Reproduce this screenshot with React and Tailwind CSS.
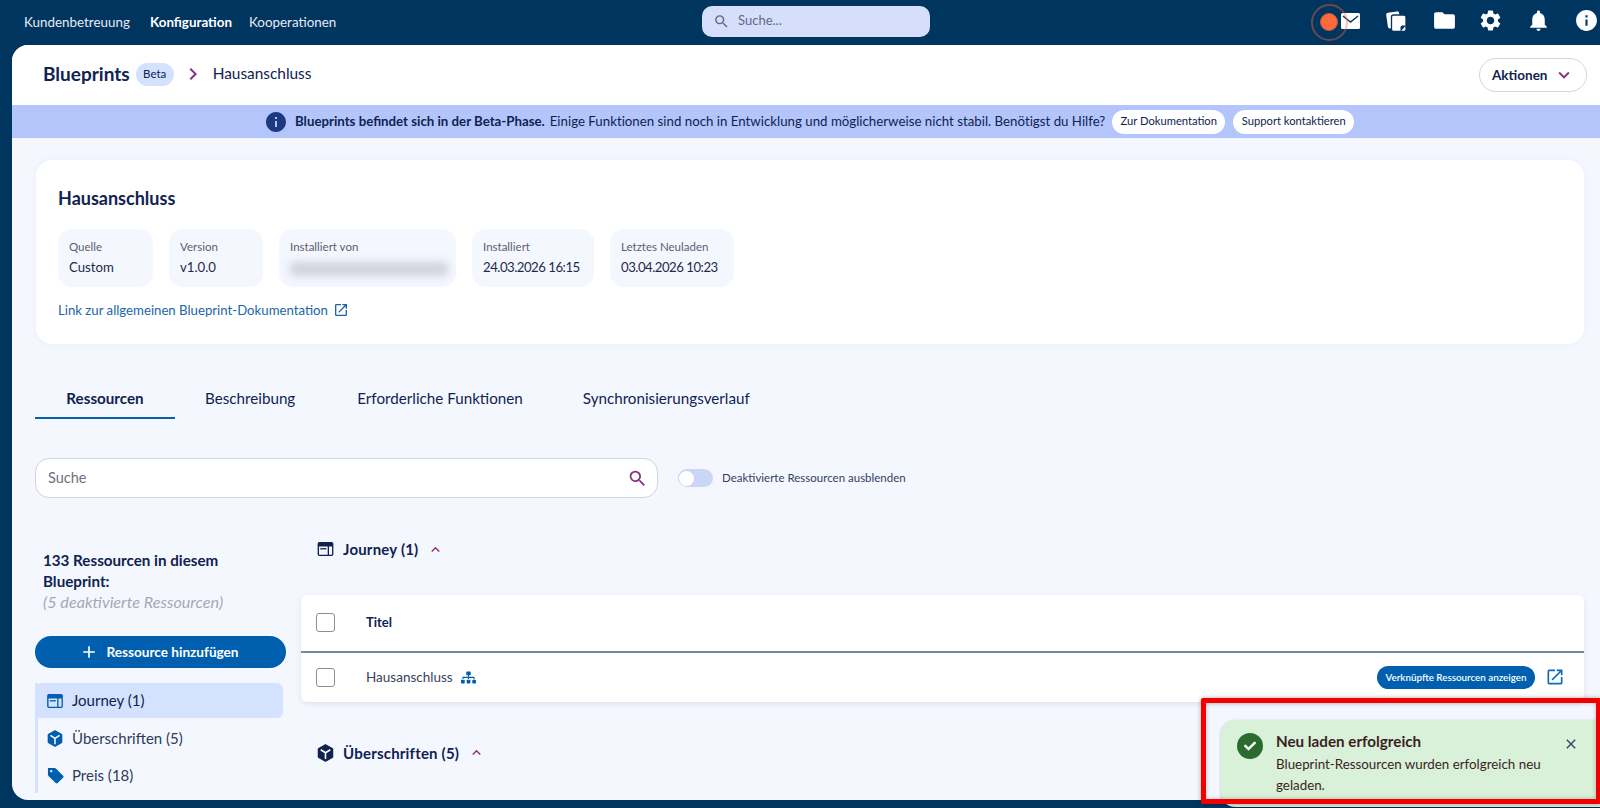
import React from 'react';
import { MdFolder, MdSettings, MdNotifications, MdInfo, MdSearch, MdOpenInNew, MdKeyboardArrowDown, MdKeyboardArrowUp, MdChevronRight, MdAdd, MdClose } from 'react-icons/md';
import { FaSitemap, FaCheck } from 'react-icons/fa';

const facts = [
    { label: 'Quelle', value: 'Custom', width: 'w-[95px]' },
    { label: 'Version', value: 'v1.0.0', width: 'w-[94px]' },
    { label: 'Installiert von', value: null, width: 'w-[177px]' },
    { label: 'Installiert', value: '24.03.2026 16:15', width: 'w-[122px]' },
    { label: 'Letztes Neuladen', value: '03.04.2026 10:23', width: 'w-[124px]' },
];

const JourneyIcon = ({ className }) => (
    <svg viewBox="0 0 18 16" className={className} fill="currentColor">
        <path d="M2 0h14a2 2 0 0 1 2 2v12a2 2 0 0 1-2 2H2a2 2 0 0 1-2-2V2a2 2 0 0 1 2-2zm-.4 5v9c0 .3.2.5.5.5h9.400V5zm11.400 0v9.500h3c.3 0 .5-.2.5-.5V5z" fillRule="evenodd" />
        <rect x="3" y="7" width="7" height="1.500" />
    </svg>
);

const CubeIcon = ({ className }) => (
    <svg viewBox="0 0 16 18" className={className} fill="none">
        <path d="M8 1 L15 5 V13 L8 17 L1 13 V5 Z" fill="currentColor" stroke="currentColor" strokeWidth="1.500" strokeLinejoin="round" />
        <path d="M3.200 5.800 L8 8.800 L12.800 5.800 M8 8.800 V15" stroke="white" strokeWidth="1.600" />
    </svg>
);

const TagIcon = ({ className }) => (
    <svg viewBox="0 0 18 18" className={className} fill="currentColor">
        <path fillRule="evenodd" d="M1 1h7a2 2 0 0 1 1.400.6l7.600 7.600a1.500 1.500 0 0 1 0 2.100l-5.700 5.700a1.500 1.500 0 0 1-2.100 0L1.600 9.400A2 2 0 0 1 1 8zm3.500 2.200a1.200 1.200 0 1 0 0 2.400 1.200 1.200 0 0 0 0-2.400z" />
    </svg>
);

const MailIcon = () => (
    <span className="flex w-[25px] justify-center">
        <svg viewBox="0 0 19 16" className="w-[19px] h-[16px]">
            <rect width="19" height="16" rx="1.500" fill="white" />
            <path d="M2 3 L9.500 9 L17 3" fill="none" stroke="#003560" strokeWidth="1.400" />
        </svg>
    </span>
);

const CopiesIcon = () => (
    <svg viewBox="0 0 21 22" className="w-[21px] h-[22px]">
        <rect x="1" y="2" width="13" height="16" rx="2" fill="white" transform="rotate(-8 7 10)" />
        <rect x="5.500" y="5" width="14.500" height="16.500" rx="2" fill="white" stroke="#003560" strokeWidth="1.300" />
        <path d="M20 15.500 L14.500 21.500 V17.500 a2 2 0 0 1 2-2 z" fill="#003560" />
    </svg>
);

const Checkbox = () => <span className="block w-[19px] h-[19px] rounded-[3px] border border-[#8a8f98] bg-white shrink-0"></span>;

const Section = ({ icon, title, className }) => (
    <div className={`flex items-center pl-4 text-[#0f2350] ${className}`}>
        {icon}
        <span className="ml-[9px] text-[15px] font-bold tracking-[0.2px]">{title}</span>
        <MdKeyboardArrowUp className="ml-[9px] text-[#8b2f7f]" size={17} />
    </div>
);

const App = () => {
    return (
        <div className="relative h-[808px] w-[1600px] overflow-hidden bg-[#003560] text-[#0f2350] font-['Lato','Open_Sans',sans-serif]">
            <nav className="h-[45px] flex items-center pl-6 text-[13.4px] text-[#e6ebf5]">
                <a className="w-[126px]">Kundenbetreuung</a>
                <a className="w-[99px] font-bold text-white">Konfiguration</a>
                <a className="w-[141px]">Kooperationen</a>
                <div className="ml-[312px] w-[228px] h-[31px] -mt-[3px] rounded-[10px] bg-[#d5defb] flex items-center pl-[11px] text-[13px] text-[#5f6b85]">
                    <MdSearch size={17} />
                    <span className="ml-[8px]">Suche...</span>
                </div>
                <div className="relative ml-auto flex items-center text-white">
                    <div className="flex items-center gap-[23px] pr-[1px] -mt-[4px]">
                        <MailIcon />
                        <CopiesIcon />
                        <MdFolder className="ml-[2px]" size={25} />
                        <MdSettings className="-ml-[2px]" size={25} />
                        <MdNotifications size={25} />
                        <MdInfo size={25} />
                    </div>
                    <span className="absolute left-[-27px] top-[-8px] w-[37px] h-[37px] rounded-full border-2 border-[#ff6a3c]/40"></span>
                    <span className="absolute left-[-18px] top-[1px] w-[18px] h-[18px] rounded-full bg-[#ff6a3c] border border-[#c9573a]"></span>
                </div>
            </nav>

            <main className="ml-3 h-[755px] rounded-tl-[16px] rounded-bl-[16px] bg-[#f5f7ff] overflow-hidden">
                <header className="h-[60px] bg-white flex items-center pl-[31px] pr-[13px]">
                    <span className="-mt-[2px] text-[19px] font-bold">Blueprints</span>
                    <span className="-mt-[2px] ml-[6px] w-[38px] h-[23px] rounded-full bg-[#d5e2ff] text-[11.5px] flex items-center justify-center">Beta</span>
                    <MdChevronRight className="-mt-[2px] ml-[7px] text-[#8b2f7f]" size={24} />
                    <span className="-mt-[2px] ml-[8px] text-[15.4px]">Hausanschluss</span>
                    <button className="ml-auto w-[108px] h-[34px] rounded-full border border-[#d3d6dd] bg-white flex items-center pl-3 text-[13.5px] font-bold">
                        Aktionen
                        <MdKeyboardArrowDown className="ml-[6px] text-[#8b2f7f]" size={22} />
                    </button>
                </header>

                <div className="h-[33px] bg-[#b3c5fb] flex items-center pl-[254px] text-[13.25px]">
                    <MdInfo className="-ml-[2px] text-[#1c3a80]" size={24} />
                    <span className="ml-[7px] font-bold">Blueprints befindet sich in der Beta-Phase.</span>
                    <span className="ml-[5px] tracking-[0.01px]">Einige Funktionen sind noch in Entwicklung und möglicherweise nicht stabil. Benötigst du Hilfe?</span>
                    <a className="ml-[7px] w-[113px] h-6 rounded-full bg-white text-[11.2px] flex items-center justify-center">Zur Dokumentation</a>
                    <a className="ml-2 w-[121px] h-6 rounded-full bg-white text-[11.2px] flex items-center justify-center">Support kontaktieren</a>
                </div>

                <section className="mt-[22px] ml-6 mr-4 h-[184px] rounded-[16px] bg-white pl-[22px] pt-[26px] shadow-[0_0_6px_rgba(120,130,180,0.08)]">
                    <h2 className="text-[18px] font-bold leading-6">Hausanschluss</h2>
                    <div className="mt-[19px] flex gap-4">
                        {facts.map((fact) => (
                            <div key={fact.label} className={`${fact.width} h-[58px] rounded-[14px] bg-[#f5f7ff] pl-[11px] pt-[10px]`}>
                                <div className="text-[11.5px] leading-[15px] text-[#5a6072]">{fact.label}</div>
                                {fact.value ? (
                                    <div className={`mt-[5px] text-[13.2px] leading-[17px] text-[#1d2a4a] ${fact.value.length > 10 ? 'tracking-[-0.5px]' : ''}`}>{fact.value}</div>
                                ) : (
                                    <div className="mt-[8px] w-[158px] h-[14px] rounded bg-[#cfd2dc] blur-[4px]"></div>
                                )}
                            </div>
                        ))}
                    </div>
                    <a className="mt-[14px] flex items-center text-[13.2px] leading-[18px] text-[#1a66a8]">
                        Link zur allgemeinen Blueprint-Dokumentation
                        <MdOpenInNew className="ml-[5px]" size={16} />
                    </a>
                </section>

                <div className="mt-[38px] ml-[23px] flex h-[37px] pt-[5px] text-[15.2px]">
                    <div className="w-[140px] text-center font-bold border-b-2 border-[#0b5ea8]">Ressourcen</div>
                    <div className="ml-[30px]">Beschreibung</div>
                    <div className="ml-[62px]">Erforderliche Funktionen</div>
                    <div className="ml-[60px]">Synchronisierungsverlauf</div>
                </div>

                <div className="mt-[39px] ml-[23px] flex items-center">
                    <div className="w-[623px] h-10 rounded-[14px] border border-[#d3d3e0] bg-white flex items-center justify-between pl-3 pr-[9px] text-[14.5px] text-[#6c7280]">
                        Suche
                        <MdSearch className="text-[#8b2f7f]" size={21} />
                    </div>
                    <div className="ml-[20px] w-[35px] h-[18px] rounded-full bg-[#cbd5f5] flex items-center">
                        <span className="block w-[15px] h-[15px] ml-[1px] rounded-full bg-white"></span>
                    </div>
                    <span className="ml-[9px] text-[11.5px] text-[#33405f]">Deaktivierte Ressourcen ausblenden</span>
                </div>

                <div className="flex ml-[23px] mr-[16px]">
                    <aside className="w-[251px] shrink-0 pt-[52px]">
                        <div className="pl-2 text-[15.2px] leading-[21px] font-bold">133 Ressourcen in diesem<br />Blueprint:</div>
                        <div className="pl-2 text-[16.2px] leading-[20px] italic text-[#a5a8b4]">(5 deaktivierte Ressourcen)</div>
                        <button className="mt-[24px] w-full h-8 rounded-full bg-[#005fae] text-white text-[13.6px] font-bold flex items-center justify-center">
                            <MdAdd className="-ml-[3px]" size={20} />
                            <span className="ml-[7px]">Ressource hinzufügen</span>
                        </button>
                        <div className="mt-[15px] w-[248px] border-l-[3px] border-[#d5e2ff]">
                            <div className="-ml-[3px] h-[35px] rounded-[6px] bg-[#d5e2ff] flex items-center pl-3 text-[15px]">
                                <JourneyIcon className="w-[16px] h-[14px] text-[#005fae]" />
                                <span className="ml-[9px]">Journey (1)</span>
                            </div>
                            <div className="h-[40px] flex items-center pl-[9px] text-[15px] text-[#2e3b58]">
                                <CubeIcon className="w-[16px] h-[17px] text-[#005fae]" />
                                <span className="ml-[9px]">Überschriften (5)</span>
                            </div>
                            <div className="h-[35px] flex items-center pl-[9px] text-[15px] text-[#2e3b58]">
                                <TagIcon className="w-[17px] h-[17px] text-[#005fae]" />
                                <span className="ml-2">Preis (18)</span>
                            </div>
                        </div>
                    </aside>

                    <div className="ml-[15px] flex-1">
                        <Section className="mt-[40px]" title="Journey (1)" icon={<JourneyIcon className="w-[17px] h-[14px]" />} />
                        <div className="mt-[34px] h-[107px] rounded-[6px] bg-white shadow-[0_2px_5px_rgba(60,70,110,0.12)]">
                            <div className="h-[58px] flex items-center pl-[15px] border-b-2 border-[#7b8794]">
                                <Checkbox />
                                <span className="ml-[31px] text-[13px] font-bold">Titel</span>
                            </div>
                            <div className="h-[49px] flex items-center pl-[15px] pr-[19px]">
                                <Checkbox />
                                <span className="ml-[31px] text-[13.5px] text-[#3a4258]">Hausanschluss</span>
                                <FaSitemap className="ml-2 text-[#005fae]" size={15} />
                                <a className="ml-auto w-[158px] h-[23px] rounded-full bg-[#005fae] text-white text-[9.8px] font-semibold flex items-center justify-center">Verknüpfte Ressourcen anzeigen</a>
                                <MdOpenInNew className="ml-[10px] text-[#0b6cbb]" size={20} />
                            </div>
                        </div>
                        <Section className="mt-[40px]" title="Überschriften (5)" icon={<CubeIcon className="w-[17px] h-[18px]" />} />
                    </div>
                </div>
            </main>

            {/* toast + red annotation sit on top of the page */}
            <div className="absolute left-[1221px] top-[720px] w-[400px] h-[87px] rounded-[14px] bg-[#d9f0d9] shadow-[0_1px_3px_rgba(0,0,0,0.25)] pl-[16px] pt-[11px] text-[#3b1f1f]">
                <div className="flex">
                    <span className="mt-[2px] w-[26px] h-[26px] rounded-full bg-[#2c6b30] text-white flex items-center justify-center shrink-0">
                        <FaCheck size={12} />
                    </span>
                    <div className="ml-[13px] w-[275px]">
                        <div className="text-[15.2px] leading-[20px] font-bold">Neu laden erfolgreich</div>
                        <div className="mt-[3px] text-[13.35px] leading-[21px]">Blueprint-Ressourcen wurden erfolgreich neu geladen.</div>
                    </div>
                    <MdClose className="ml-3 mt-[5px] text-[#33405f]" size={16} />
                </div>
            </div>
            <div className="absolute left-[1201px] top-[698px] w-[400px] h-[106px] border-[5px] border-[#f20000] rounded-[2px] shadow-[0_0_4px_rgba(0,0,0,0.35),inset_0_0_4px_rgba(0,0,0,0.25)]"></div>
        </div>
    );
};

export default App;
